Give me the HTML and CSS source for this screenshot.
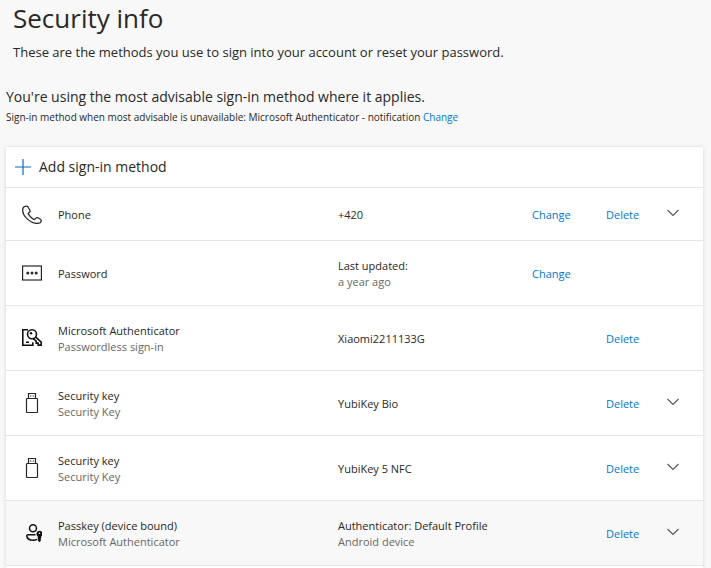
FILE: index.html
```html
<!DOCTYPE html>
<html lang="en">
<head>
<meta charset="utf-8">
<meta name="viewport" content="width=device-width, initial-scale=1">
<title>Security info</title>
<link rel="stylesheet" href="styles.css">
</head>
<body>
<svg class="sprite" aria-hidden="true">
  <symbol id="chevron" viewBox="0 0 12 8"><path d="M.5 1 6 6.500 11.500 1" fill="none" stroke="currentColor" stroke-width="1.100"/></symbol>
  <symbol id="usb" viewBox="0 0 20 20"><g fill="none" stroke="currentColor" stroke-width="1.200"><path d="M6.500 5.500v-5h7v5"/><rect x="4.500" y="5.500" width="11" height="14" rx=".8"/></g><path d="M8 2.500h1.300v1H8zM10.700 2.500H12v1h-1.300z" fill="currentColor"/></symbol>
</svg>
<header class="intro">
  <h1 class="title">Security info</h1>
  <p class="lead">These are the methods you use to sign into your account or reset your password.</p>
</header>
<main class="main">
  <section class="default-method">
    <h2 class="advice">You're using the most advisable sign-in method where it applies.</h2>
    <p class="fallback">Sign-in method when most advisable is unavailable: Microsoft Authenticator - notification <a class="link" href="#default">Change</a></p>
  </section>
  <section class="card">
    <button class="add" type="button">
      <svg class="add-icon" viewBox="0 0 16 16" aria-hidden="true"><path d="M8 0v16M0 8h16" stroke="currentColor" stroke-width="1.200"/></svg>
      <span>Add sign-in method</span>
    </button>
    <table class="methods">
      <colgroup><col class="col-icon"><col class="col-name"><col class="col-detail"><col class="col-change"><col class="col-delete"><col class="col-expand"></colgroup>
      <tbody>
        <tr class="short">
          <td class="icon-cell"><svg class="icon" viewBox="0 0 20 20" aria-hidden="true"><path transform="translate(0 1.500) scale(1 .93)" d="M4.200.7C2.200.9.700 2.600.700 5c0 6.800 8 14.300 14.300 14.300 2.200 0 3.900-1.100 4.300-2.600.2-.8-.2-1.300-.8-1.800l-2.300-1.600c-.8-.6-1.600-.4-2.200.2l-1.100 1.200c-.4.500-.9.500-1.400.1-2-1.500-3.600-3.200-5-5.300-.4-.6-.3-1 .1-1.400l1-.9c.7-.6.8-1.300.3-2.100L6.200 1.900C5.700 1.100 5.100.6 4.200.7Z" fill="none" stroke="currentColor" stroke-width="1.300"/></svg></td>
          <td>Phone</td>
          <td>+420</td>
          <td><a class="link" href="#change-phone">Change</a></td>
          <td><a class="link" href="#delete-phone">Delete</a></td>
          <td><button class="expand" type="button" aria-label="Expand phone"><svg class="chevron" aria-hidden="true"><use href="#chevron"/></svg></button></td>
        </tr>
        <tr>
          <td class="icon-cell"><svg class="icon" viewBox="0 0 20 20" aria-hidden="true"><rect x=".6" y="3" width="18.800" height="14" fill="none" stroke="currentColor" stroke-width="1.200"/><g fill="currentColor"><circle cx="5.800" cy="10" r="1.500"/><circle cx="10" cy="10" r="1.500"/><circle cx="14.200" cy="10" r="1.500"/></g></svg></td>
          <td>Password</td>
          <td>Last updated:<span class="sub">a year ago</span></td>
          <td><a class="link" href="#change-password">Change</a></td>
          <td></td>
          <td></td>
        </tr>
        <tr>
          <td class="icon-cell"><svg class="icon dark" viewBox="0 0 20 20" aria-hidden="true"><g fill="none" stroke="currentColor" stroke-width="1.600"><path d="M6 1.700H.8v15.600h10v-3M4 14.200h3"/><circle cx="10" cy="6.200" r="4.500"/><path d="m13.500 8.800 5.700 5.300v3h-3v-2h-2v-2l-3-2.400"/></g><circle cx="9" cy="5.200" r="1.200" fill="currentColor"/></svg></td>
          <td>Microsoft Authenticator<span class="sub">Passwordless sign-in</span></td>
          <td>Xiaomi2211133G</td>
          <td></td>
          <td><a class="link" href="#delete-authenticator">Delete</a></td>
          <td></td>
        </tr>
        <tr>
          <td class="icon-cell"><svg class="icon" aria-hidden="true"><use href="#usb"/></svg></td>
          <td>Security key<span class="sub">Security Key</span></td>
          <td>YubiKey Bio</td>
          <td></td>
          <td><a class="link" href="#delete-bio">Delete</a></td>
          <td><button class="expand" type="button" aria-label="Expand YubiKey Bio"><svg class="chevron" aria-hidden="true"><use href="#chevron"/></svg></button></td>
        </tr>
        <tr>
          <td class="icon-cell"><svg class="icon" aria-hidden="true"><use href="#usb"/></svg></td>
          <td>Security key<span class="sub">Security Key</span></td>
          <td>YubiKey 5 NFC</td>
          <td></td>
          <td><a class="link" href="#delete-nfc">Delete</a></td>
          <td><button class="expand" type="button" aria-label="Expand YubiKey 5 NFC"><svg class="chevron" aria-hidden="true"><use href="#chevron"/></svg></button></td>
        </tr>
        <tr class="active">
          <td class="icon-cell"><svg class="icon dark" viewBox="0 0 20 20" aria-hidden="true"><g fill="none" stroke="currentColor" stroke-width="1.500"><circle cx="11" cy="5.200" r="3.500"/><path d="M13.500 11.800H6.200c-1.200 0-1.500.7-1.300 1.700.5 2.300 3 3.700 6.100 3.700 1.600 0 3-.3 4-.8"/></g><path fill-rule="evenodd" d="M17.500 7.800a3.100 3.100 0 0 1 1.700 5.700v1.500l-.7.900.7 1-1.700 2.300-1.700-1.600v-4.100a3.100 3.100 0 0 1 1.700-5.700Zm0 1.600a.8.8 0 1 0 0 1.600.8.8 0 0 0 0-1.600Z" fill="currentColor"/></svg></td>
          <td>Passkey (device bound)<span class="sub">Microsoft Authenticator</span></td>
          <td>Authenticator: Default Profile<span class="sub">Android device</span></td>
          <td></td>
          <td><a class="link" href="#delete-passkey">Delete</a></td>
          <td><button class="expand" type="button" aria-label="Expand passkey"><svg class="chevron" aria-hidden="true"><use href="#chevron"/></svg></button></td>
        </tr>
      </tbody>
    </table>
  </section>
</main>
</body>
</html>
```
FILE: styles.css
```css
* { box-sizing: border-box; }
body {
  display: flex;
  flex-direction: column;
  min-height: 100vh;
  margin: 0;
  background: #f8f8f8;
  color: #292827;
  font-family: "Segoe UI", "Open Sans", "Noto Sans", sans-serif;
  font-size: 12px;
  line-height: 16px;
}
h1, h2, p { margin: 0; font-weight: 400; }
.sprite { display: none; }
.intro { padding: 0 13px; }
.title { font-size: 26px; line-height: 36px; }
.lead { margin-top: 6px; font-size: 13px; line-height: 20px; }
.main { display: flex; flex: 1; flex-direction: column; padding: 0 8px 0 6px; }
.default-method { padding: 24px 0 21px; }
.advice { font-size: 14px; line-height: 22px; }
.fallback { font-size: 10px; line-height: 18px; }
.link { color: #0078d4; text-decoration: none; }
.link:hover { text-decoration: underline; }
.card { flex: 1; background: #fff; box-shadow: 0 0 4px rgba(0, 0, 0, .14); }
.add {
  display: flex;
  align-items: center;
  gap: 8px;
  width: 100%;
  height: 40px;
  padding: 0 9px;
  border: 0;
  background: none;
  color: inherit;
  font: inherit;
  font-size: 14px;
}
.add-icon { width: 16px; height: 16px; color: #0f6cbd; }
.methods { width: 100%; border-collapse: separate; border-spacing: 0; table-layout: fixed; font-size: 11px; }
.col-icon { width: 52px; }
.col-detail { width: 194px; }
.col-change { width: 74px; }
.col-delete { width: 61px; }
.col-expand { width: 36px; }
td { height: 65px; padding: 2px 0 0; border-top: 1px solid #e6e6e6; vertical-align: middle; white-space: nowrap; }
.short td { height: 53px; }
.active td { background: #f8f8f8; border-bottom: 1px solid #e6e6e6; height: 66px; }
.icon-cell { padding: 0 0 0 16px; }
.icon { display: block; width: 20px; height: 20px; }
.dark { color: #111; }
.sub { display: block; color: #696765; }
.expand { display: block; margin-bottom: 4px; padding: 0; border: 0; background: none; color: #555; }
.chevron { display: block; width: 12px; height: 8px; }
```
